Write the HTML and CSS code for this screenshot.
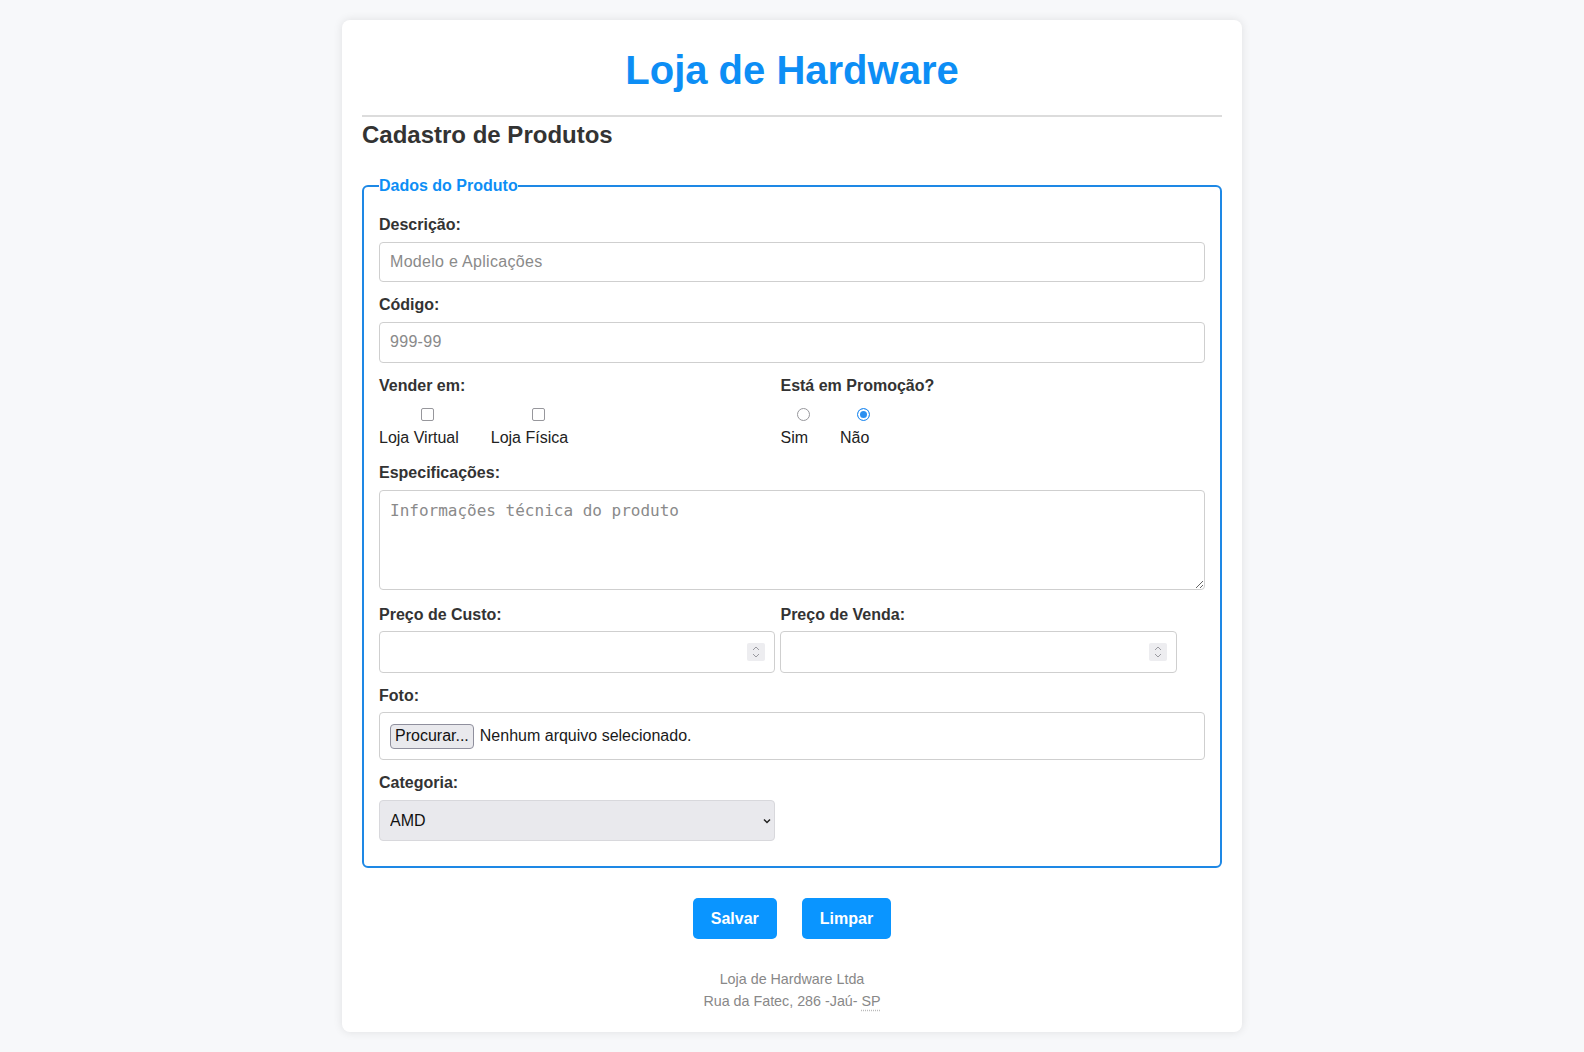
FILE: index.html
```html
<!DOCTYPE html>
<html lang="pt-BR">
<head>
<meta charset="utf-8">
<title>Loja de Hardware</title>
<link rel="stylesheet" href="styles.css">
</head>
<body>
<main class="card">
  <header class="header">
    <h1 class="title">Loja de Hardware</h1>
  </header>
  <h2 class="subtitle">Cadastro de Produtos</h2>
  <form class="form">
    <fieldset class="fieldset">
      <legend class="legend">Dados do Produto</legend>

      <div class="group">
        <label class="label" for="descricao">Descrição:</label>
        <input class="field" id="descricao" type="text" placeholder="Modelo e Aplicações">
      </div>

      <div class="group">
        <label class="label" for="codigo">Código:</label>
        <input class="field" id="codigo" type="text" placeholder="999-99">
      </div>

      <div class="row group group-options">
        <div class="col">
          <span class="label">Vender em:</span>
          <div class="options">
            <label class="option"><input class="check" type="checkbox" name="vender"><span>Loja Virtual</span></label>
            <label class="option"><input class="check" type="checkbox" name="vender"><span>Loja Física</span></label>
          </div>
        </div>
        <div class="col">
          <span class="label">Está em Promoção?</span>
          <div class="options">
            <label class="option"><input class="radio" type="radio" name="promo"><span>Sim</span></label>
            <label class="option"><input class="radio" type="radio" name="promo" checked><span>Não</span></label>
          </div>
        </div>
      </div>

      <div class="group group-area">
        <label class="label" for="espec">Especificações:</label>
        <textarea class="area" id="espec" placeholder="Informações técnica do produto"></textarea>
      </div>

      <div class="row group">
        <div class="col">
          <label class="label" for="custo">Preço de Custo:</label>
          <div class="num">
            <input class="field field-num" id="custo" type="text">
            <span class="spin"><svg width="10" height="14" viewBox="0 0 10 14"><path d="M2 5 L5 2 L8 5" fill="none" stroke="#9a9aa0" stroke-width="1"/><path d="M2 9 L5 12 L8 9" fill="none" stroke="#9a9aa0" stroke-width="1"/></svg></span>
          </div>
        </div>
        <div class="col">
          <label class="label" for="venda">Preço de Venda:</label>
          <div class="num">
            <input class="field field-num" id="venda" type="text">
            <span class="spin"><svg width="10" height="14" viewBox="0 0 10 14"><path d="M2 5 L5 2 L8 5" fill="none" stroke="#9a9aa0" stroke-width="1"/><path d="M2 9 L5 12 L8 9" fill="none" stroke="#9a9aa0" stroke-width="1"/></svg></span>
          </div>
        </div>
      </div>

      <div class="group">
        <span class="label">Foto:</span>
        <div class="file-box">
          <button class="file-btn" type="button">Procurar...</button>
          <span class="file-text">Nenhum arquivo selecionado.</span>
        </div>
      </div>

      <div class="group">
        <label class="label" for="categoria">Categoria:</label>
        <div class="select-wrap">
          <select class="select" id="categoria">
            <option>AMD</option>
            <option>Intel</option>
            <option>NVIDIA</option>
          </select>
          <svg class="chev" width="8" height="6" viewBox="0 0 8 6"><path d="M1 1.5 L4 4.5 L7 1.5" fill="none" stroke="#222" stroke-width="1.5"/></svg>
        </div>
      </div>
    </fieldset>

    <div class="actions">
      <button class="btn" type="button">Salvar</button>
      <button class="btn" type="reset">Limpar</button>
    </div>
  </form>
  <footer class="footer">
    <div>Loja de Hardware Ltda</div>
    <div>Rua da Fatec, 286 -Jaú- <abbr title="São Paulo">SP</abbr></div>
  </footer>
</main>
</body>
</html>
```

FILE: styles.css
```css
* {
  box-sizing: border-box;
}

body {
  margin: 0;
  background: #f7f8fa;
  font-family: "Liberation Sans", Arial, Helvetica, sans-serif;
  font-size: 16px;
  color: #333;
}

.card {
  width: 900px;
  margin: 20px auto;
  background: #fff;
  border-radius: 8px;
  box-shadow: 0 0 10px rgba(0, 0, 0, 0.1);
  padding: 20px;
}

.header {
  padding: 7px 0 22px;
  border-bottom: 2px solid #dcdcdc;
}

.title {
  margin: 0;
  font-size: 40px;
  line-height: 46px;
  text-align: center;
  font-weight: bold;
  color: #0d8ef5;
}

.subtitle {
  margin: 4px 0 28px;
  font-size: 24px;
  line-height: 28px;
  font-weight: bold;
  color: #333;
}

.form {
  margin: 0;
}

.fieldset {
  margin: 0;
  border: 2px solid #1e88e5;
  border-radius: 6px;
  padding: 21px 15px 11px;
  min-width: 0;
}

.legend {
  padding: 0;
  font-size: 16px;
  font-weight: bold;
  color: #0d8ef5;
}

.group {
  margin-bottom: 14px;
}

.group-options {
  margin-bottom: 17px;
}

.group-area {
  margin-bottom: 16px;
}

.label {
  display: block;
  font-weight: bold;
  margin-bottom: 7.5px;
  color: #333;
}

.field {
  display: block;
  width: 100%;
  height: 40.9px;
  padding: 0 10px;
  border: 1px solid #cfcfcf;
  border-radius: 4px;
  font-family: "Liberation Sans", Arial, Helvetica, sans-serif;
  font-size: 16px;
  color: #222;
  background: #fff;
  outline: none;
}

.field-num {
  height: 41.4px;
}

.field::placeholder {
  color: #8a8a8a;
  letter-spacing: 0.3px;
}

.row {
  display: flex;
  gap: 5px;
}

.col {
  width: 48%;
}

.options {
  display: flex;
  gap: 32px;
}

.option {
  display: flex;
  flex-direction: column;
  align-items: center;
  color: #222;
}

.check,
.radio {
  appearance: none;
  -webkit-appearance: none;
  width: 13px;
  height: 13px;
  margin: 6px -9px 8px 9px;
  background: #fff;
  border: 1px solid #97979c;
}

.check {
  border-radius: 2px;
}

.radio {
  border-radius: 50%;
}

.radio:checked {
  border: 1.5px solid #2b8ff0;
  background: #2b8ff0;
  box-shadow: inset 0 0 0 2px #fff;
}

.area {
  display: block;
  width: 100%;
  height: 100px;
  padding: 10px;
  border: 1px solid #cfcfcf;
  border-radius: 4px;
  font-family: "DejaVu Sans Mono", "Liberation Mono", monospace;
  font-size: 16px;
  color: #222;
  resize: vertical;
  outline: none;
}

.area::placeholder {
  color: #8a8a8a;
}

.num {
  position: relative;
}

.spin {
  position: absolute;
  right: 10px;
  top: 50%;
  transform: translateY(-50%);
  width: 18px;
  height: 18px;
  background: #ededf0;
  border-radius: 2px;
  display: flex;
  align-items: center;
  justify-content: center;
}

.file-box {
  display: flex;
  align-items: center;
  gap: 6px;
  height: 48px;
  padding: 0 10px;
  border: 1px solid #cfcfcf;
  border-radius: 4px;
}

.file-btn {
  height: 25px;
  padding: 0 4px;
  border: 1px solid #8f8f9d;
  border-radius: 4px;
  background: #e9e9ed;
  font-family: "Liberation Sans", Arial, Helvetica, sans-serif;
  font-size: 16px;
  color: #111;
}

.file-text {
  color: #1a1a1a;
}

.select-wrap {
  position: relative;
  width: 48%;
}

.select {
  appearance: none;
  -webkit-appearance: none;
  display: block;
  width: 100%;
  height: 41.4px;
  padding: 0 10px;
  border: 1px solid #d8d8dc;
  border-radius: 4px;
  background: #e9e9ed;
  font-family: "Liberation Sans", Arial, Helvetica, sans-serif;
  font-size: 16px;
  color: #111;
  outline: none;
}

.chev {
  position: absolute;
  right: 4px;
  top: 18px;
  pointer-events: none;
}

.actions {
  display: flex;
  justify-content: center;
  gap: 25px;
  margin-top: 30px;
}

.btn {
  height: 41px;
  padding: 0 18px;
  border: none;
  border-radius: 5px;
  background: #0a95ff;
  color: #fff;
  font-family: "Liberation Sans", Arial, Helvetica, sans-serif;
  font-size: 16px;
  font-weight: bold;
}

.footer {
  margin-top: 29px;
  text-align: center;
  color: #888;
  font-size: 14.3px;
  line-height: 22px;
}

.footer abbr {
  text-decoration: underline dotted #bbb;
  text-underline-offset: 4px;
}
```
